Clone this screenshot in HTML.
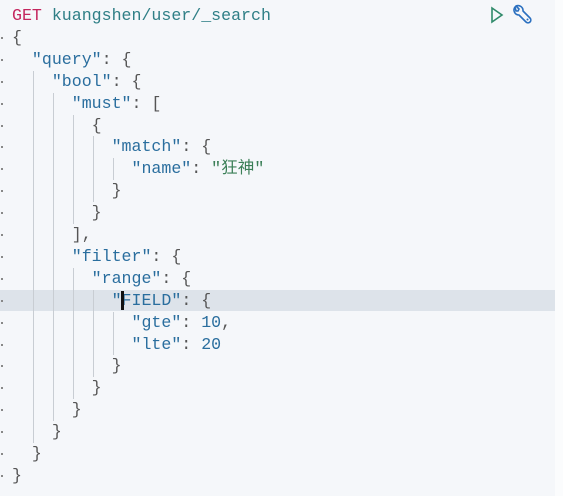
<!DOCTYPE html><html><head><style>
body{margin:0;width:563px;height:496px;background:#f5f7fa;overflow:hidden;position:relative;font-family:"Liberation Mono","Noto Sans CJK SC",monospace;font-size:16.6px}
.r{position:absolute;right:0;top:0;width:8px;height:496px;background:#fbfcfd}
.l{position:absolute;left:12px;height:21.9px;line-height:21.9px;white-space:pre;color:#555}
.k{color:#2a6e9e}.s{color:#3b7f57}.n{color:#2a6e9e}.m{color:#c4265e}.p{color:#2f7f86}
.g{position:absolute;width:1px;background:#c8cdd3}
.d{position:absolute;left:1px;width:2px;height:2px;background:#888}
.hl{position:absolute;left:0;top:290px;width:555px;height:21px;background:#dde3ea}
</style></head><body>
<div class="r"></div>
<div class="hl"></div>
<div id="c"></div>
<div style="position:absolute;left:121px;top:291px;width:3px;height:19px;background:#111"></div>
<svg style="position:absolute;left:489px;top:6px" width="16" height="18" viewBox="0 0 16 18"><path d="M3 2 L13 9 L3 16 Z" fill="none" stroke="#2f8a6a" stroke-width="1.6"/></svg>
<svg style="position:absolute;left:511px;top:4px" width="24" height="22" viewBox="0 0 24 22"><path d="M4 3 A5 5 0 0 0 8 11 L15 18 A2.5 2.5 0 0 0 19 14 L12 7 A5 5 0 0 0 5 2 L8 5 L7 7 L5 7 Z" fill="none" stroke="#2a6fbf" stroke-width="1.6" stroke-linejoin="round"/><circle cx="16.5" cy="15.5" r="1" fill="#2a6fbf"/></svg>
<script>
var L=[
'<span class="m">GET</span> <span class="p">kuangshen/user/_search</span>',
'{',
'  <span class="k">"query"</span>: {',
'    <span class="k">"bool"</span>: {',
'      <span class="k">"must"</span>: [',
'        {',
'          <span class="k">"match"</span>: {',
'            <span class="k">"name"</span>: <span class="s">"狂神"</span>',
'          }',
'        }',
'      ],',
'      <span class="k">"filter"</span>: {',
'        <span class="k">"range"</span>: {',
'          <span class="k">"FIELD"</span>: {',
'            <span class="k">"gte"</span>: <span class="n">10</span>,',
'            <span class="k">"lte"</span>: <span class="n">20</span>',
'          }',
'        }',
'      }',
'    }',
'  }',
'}'];
var h='';
for(var i=0;i<L.length;i++){var t=5+i*21.9;h+='<div class="l" style="top:'+t+'px">'+L[i]+'</div>';if(i>0)h+='<div class="d" style="top:'+(t+10)+'px"></div>';}
function g(x,a,b){h+='<div class="g" style="left:'+x+'px;top:'+(5+a*21.9)+'px;height:'+((b-a+1)*21.9)+'px"></div>';}
g(33,3,19);g(53,4,18);g(73,5,9);g(73,12,17);g(93,6,8);g(93,13,16);g(113,7,7);g(113,14,15);
document.getElementById('c').innerHTML=h;
</script>
</body></html>
